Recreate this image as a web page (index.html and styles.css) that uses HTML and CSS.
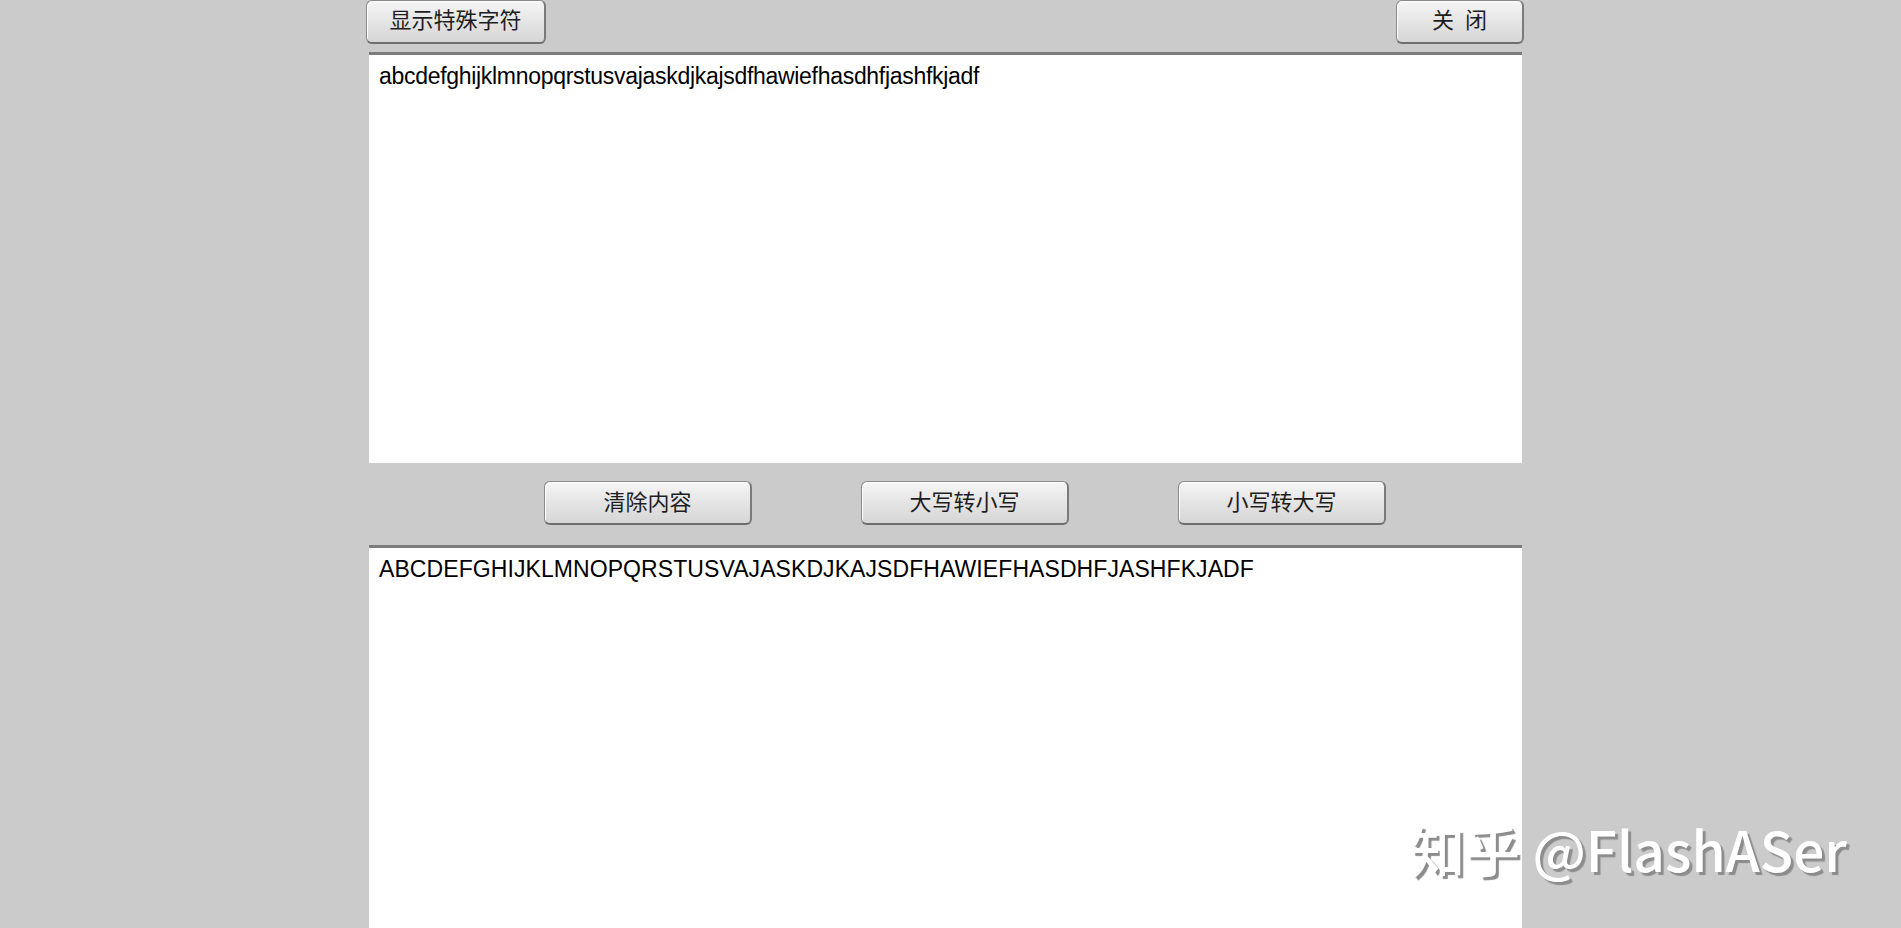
FILE: index.html
```html
<!DOCTYPE html>
<html lang="zh">
<head>
<meta charset="utf-8">
<title>大小写转换</title>
<link rel="stylesheet" href="styles.css">
</head>
<body>
<div class="app">
  <div class="toolbar">
    <button class="btn btn-special">显示特殊字符</button>
    <button class="btn btn-close">关 闭</button>
  </div>
  <div class="field field-top">abcdefghijklmnopqrstusvajaskdjkajsdfhawiefhasdhfjashfkjadf</div>
  <div class="actions">
    <button class="btn btn-action">清除内容</button>
    <button class="btn btn-action">大写转小写</button>
    <button class="btn btn-action">小写转大写</button>
  </div>
  <div class="field field-bottom">ABCDEFGHIJKLMNOPQRSTUSVAJASKDJKAJSDFHAWIEFHASDHFJASHFKJADF</div>
</div>
<div class="watermark">知乎 @FlashASer</div>
</body>
</html>
```
FILE: styles.css
```css
html, body {
  margin: 0;
  padding: 0;
  height: 100%;
  overflow: hidden;
  background: #cbcbcb;
}
.app {
  width: 1158px;
  margin-left: 366px;
  display: flex;
  flex-direction: column;
}
.toolbar {
  display: flex;
  justify-content: space-between;
  height: 44px;
}
.btn {
  box-sizing: border-box;
  height: 44px;
  border: 1px solid #8a8a8a;
  border-bottom: 2px solid #6e6e6e;
  border-right: 2px solid #7a7a7a;
  border-radius: 6px;
  background: linear-gradient(#f6f6f6 0%, #e6e6e6 45%, #d6d6d6 100%);
  box-shadow: inset 1px 1px 0 #ffffff;
  font-family: "Noto Sans CJK SC", "Noto Sans", sans-serif;
  font-size: 22px;
  font-weight: 400;
  color: #1e1e1e;
  padding: 0 0 7px 0;
  cursor: pointer;
}
.btn-special {
  width: 180px;
}
.btn-close {
  width: 128px;
  word-spacing: 6px;
}
.field {
  box-sizing: border-box;
  margin-left: 3px;
  width: 1153px;
  background: #ffffff;
  border-top: 3px solid #7c7c7c;
  padding: 8px 10px 7px;
  font-family: "Liberation Sans", Arial, sans-serif;
  font-size: 23px;
  color: #000;
}
.field-top {
  margin-top: 8px;
  height: 411px;
  letter-spacing: -0.3px;
}
.actions {
  display: flex;
  gap: 109px;
  padding-left: 178px;
  margin-top: 18px;
  margin-bottom: 20px;
}
.btn-action {
  width: 208px;
  padding-bottom: 5px;
}
.field-bottom {
  height: 400px;
  letter-spacing: 0.08px;
}
.watermark {
  position: absolute;
  left: 1410px;
  top: 808px;
  font-family: "Noto Sans CJK SC", "Noto Sans", sans-serif;
  font-size: 55px;
  font-weight: 500;
  color: #ffffff;
  text-shadow: 3px 3px 1px #8c8c8c;
  white-space: nowrap;
}
```
